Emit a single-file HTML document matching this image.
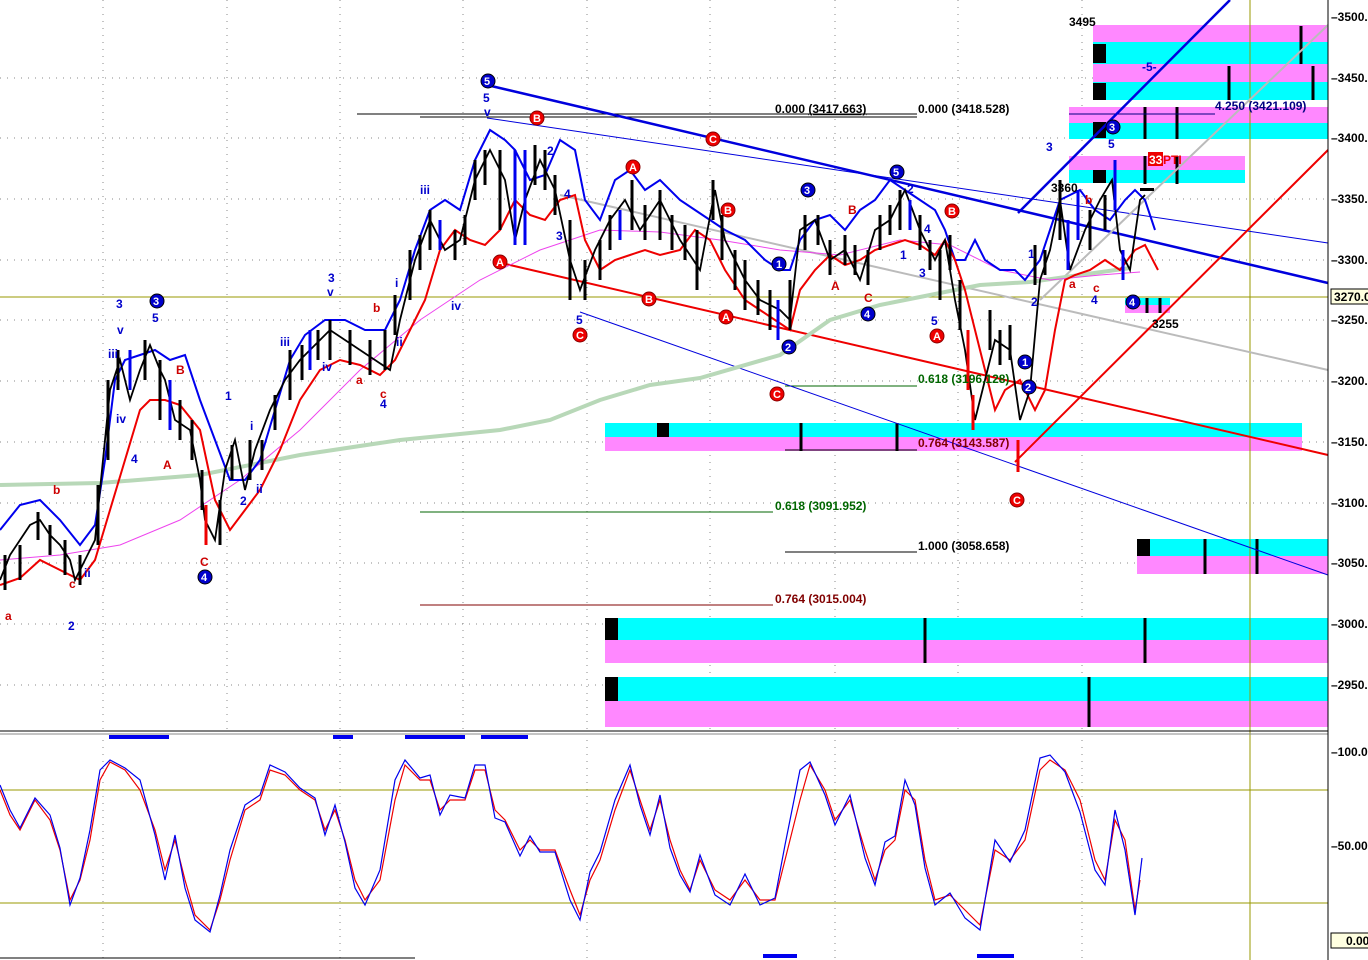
<!DOCTYPE html>
<html><head><meta charset="utf-8"><style>
html,body{margin:0;padding:0;background:#fff;width:1368px;height:960px;overflow:hidden}
svg{display:block;font-family:"Liberation Sans",sans-serif}
</style></head><body>
<svg width="1368" height="960" viewBox="0 0 1368 960" xmlns="http://www.w3.org/2000/svg">
<rect width="1368" height="960" fill="#fff"/>
<g stroke="#888" stroke-dasharray="1,6" stroke-width="1">
<line x1="103" y1="0" x2="103" y2="730"/><line x1="227" y1="0" x2="227" y2="730"/><line x1="340" y1="0" x2="340" y2="730"/><line x1="463" y1="0" x2="463" y2="730"/><line x1="587" y1="0" x2="587" y2="730"/><line x1="710" y1="0" x2="710" y2="730"/><line x1="835" y1="0" x2="835" y2="730"/><line x1="958" y1="0" x2="958" y2="730"/><line x1="1082" y1="0" x2="1082" y2="730"/>
<line x1="0" y1="78" x2="1328" y2="78"/><line x1="0" y1="138" x2="1328" y2="138"/><line x1="0" y1="199" x2="1328" y2="199"/><line x1="0" y1="260" x2="1328" y2="260"/><line x1="0" y1="320" x2="1328" y2="320"/><line x1="0" y1="381" x2="1328" y2="381"/><line x1="0" y1="442" x2="1328" y2="442"/><line x1="0" y1="503" x2="1328" y2="503"/><line x1="0" y1="563" x2="1328" y2="563"/><line x1="0" y1="624" x2="1328" y2="624"/><line x1="0" y1="685" x2="1328" y2="685"/>
<line x1="103" y1="740" x2="103" y2="960"/><line x1="340" y1="740" x2="340" y2="960"/><line x1="587" y1="740" x2="587" y2="960"/><line x1="835" y1="740" x2="835" y2="960"/><line x1="1082" y1="740" x2="1082" y2="960"/>
</g>
<g>
<rect x="1093" y="25" width="235" height="17" fill="#ff88ff"/><rect x="1093" y="42" width="235" height="22" fill="#00ffff"/>
<rect x="1093" y="64" width="235" height="18" fill="#ff88ff"/><rect x="1093" y="82" width="235" height="18" fill="#00ffff"/>
<rect x="1069" y="107" width="259" height="16" fill="#ff88ff"/><rect x="1069" y="123" width="259" height="16" fill="#00ffff"/>
<rect x="1069" y="156" width="176" height="14" fill="#ff88ff"/><rect x="1069" y="170" width="176" height="13" fill="#00ffff"/>
<rect x="605" y="423" width="697" height="14" fill="#00ffff"/><rect x="605" y="437" width="697" height="14" fill="#ff88ff"/>
<rect x="1137" y="539" width="191" height="17" fill="#00ffff"/><rect x="1137" y="556" width="191" height="18" fill="#ff88ff"/>
<rect x="605" y="618" width="723" height="22" fill="#00ffff"/><rect x="605" y="640" width="723" height="23" fill="#ff88ff"/>
<rect x="605" y="677" width="723" height="24" fill="#00ffff"/><rect x="605" y="701" width="723" height="26" fill="#ff88ff"/>
<rect x="1125" y="298" width="45" height="7" fill="#00ffff"/><rect x="1125" y="305" width="45" height="8" fill="#ff88ff"/>
<g fill="#000"><rect x="1093" y="44" width="13" height="19"/><rect x="1093" y="83" width="13" height="17"/><rect x="1093" y="122" width="13" height="16"/><rect x="1093" y="170" width="13" height="13"/><rect x="657" y="423" width="12" height="14"/><rect x="1137" y="539" width="13" height="17"/><rect x="605" y="618" width="13" height="22"/><rect x="605" y="677" width="13" height="24"/></g>
<g stroke="#000" stroke-width="3">
<line x1="1301" y1="26" x2="1301" y2="64"/><line x1="1229" y1="66" x2="1229" y2="100"/><line x1="1313" y1="66" x2="1313" y2="100"/><line x1="1145" y1="107" x2="1145" y2="139"/><line x1="1177" y1="107" x2="1177" y2="139"/><line x1="1145" y1="156" x2="1145" y2="184"/><line x1="1177" y1="156" x2="1177" y2="184"/><line x1="801" y1="423" x2="801" y2="451"/><line x1="897" y1="423" x2="897" y2="451"/><line x1="1205" y1="539" x2="1205" y2="574"/><line x1="1257" y1="539" x2="1257" y2="574"/><line x1="925" y1="618" x2="925" y2="663"/><line x1="1145" y1="618" x2="1145" y2="663"/><line x1="1089" y1="677" x2="1089" y2="727"/><line x1="1147" y1="298" x2="1147" y2="313"/><line x1="1160" y1="298" x2="1160" y2="313"/>
</g></g>
<line x1="0" y1="297" x2="1328" y2="297" stroke="#999900" stroke-width="1"/>
<line x1="1250" y1="0" x2="1250" y2="960" stroke="#999900" stroke-width="1"/>
<g stroke="#000" stroke-width="1">
<line x1="357" y1="114" x2="917" y2="114"/><line x1="420" y1="117" x2="917" y2="117"/><line x1="1069" y1="114" x2="1215" y2="114" stroke="#000080"/>
<line x1="785" y1="450" x2="917" y2="450"/><line x1="785" y1="552" x2="917" y2="552"/>
</g>
<line x1="785" y1="386" x2="917" y2="386" stroke="#006600"/>
<line x1="420" y1="512" x2="773" y2="512" stroke="#006600"/>
<line x1="420" y1="605" x2="773" y2="605" stroke="#800000"/>
<line x1="487" y1="85" x2="1328" y2="283" stroke="#0000dd" stroke-width="2.5"/>
<line x1="497" y1="262" x2="1328" y2="455" stroke="#ee0000" stroke-width="2"/>
<line x1="487" y1="118" x2="1328" y2="243" stroke="#0000dd" stroke-width="1"/>
<line x1="580" y1="312" x2="1328" y2="575" stroke="#0000dd" stroke-width="1"/>
<line x1="560" y1="195" x2="1328" y2="370" stroke="#bbb" stroke-width="2"/>
<line x1="1018" y1="213" x2="1230" y2="0" stroke="#0000dd" stroke-width="2.5"/>
<line x1="1015" y1="462" x2="1328" y2="150" stroke="#ee0000" stroke-width="2"/>
<line x1="1040" y1="300" x2="1328" y2="25" stroke="#bbb" stroke-width="2"/>
<polyline fill="none" stroke="#b8d8b8" stroke-width="4" points="0,485 100,483 200,475 300,455 400,440 500,430 550,420 600,400 650,385 700,378 780,355 830,320 880,305 930,295 980,285 1030,282 1080,275 1130,268"/>
<polyline fill="none" stroke="#ee44ee" stroke-width="1" points="0,560 60,555 120,545 180,520 240,480 300,430 360,370 420,320 480,280 540,250 600,230 660,232 720,240 780,250 840,255 900,240 950,245 1000,270 1050,280 1100,275 1140,272"/>
<polyline fill="none" stroke="#0000ee" stroke-width="2" points="0,530 20,505 40,500 60,520 80,545 95,525 105,460 115,380 125,360 140,355 155,350 170,360 185,355 200,400 215,440 230,480 245,480 260,460 275,410 290,360 305,335 325,320 345,320 365,330 385,330 400,300 415,250 430,210 445,200 460,210 475,160 490,130 505,140 515,150 530,180 545,175 560,140 575,150 585,200 600,220 615,180 630,170 645,190 660,180 680,200 695,210 710,220 725,230 745,240 765,260 780,270 790,270 800,240 815,220 830,215 845,230 860,210 875,200 890,180 905,190 920,200 935,210 945,230 955,260 965,260 975,240 985,260 1000,270 1015,270 1025,280 1040,260 1050,230 1060,200 1070,195 1080,190 1095,210 1110,220 1125,200 1135,190 1145,200 1155,230"/>
<polyline fill="none" stroke="#ee0000" stroke-width="2" points="0,585 20,578 40,560 60,570 80,580 95,560 110,510 125,460 140,410 150,400 165,400 180,405 200,430 215,500 230,530 245,510 260,490 280,450 300,400 320,370 340,360 360,365 380,375 395,360 410,330 425,300 440,250 455,230 470,240 485,245 500,230 515,200 530,215 545,220 560,200 575,195 585,240 600,270 615,260 630,255 645,250 660,255 680,250 695,230 710,240 725,270 745,300 760,310 775,320 790,330 800,290 815,270 830,255 845,265 860,260 875,250 890,245 905,240 920,245 935,255 945,240 955,260 965,290 975,330 985,370 995,410 1005,390 1020,380 1035,410 1045,390 1055,330 1065,280 1075,275 1090,270 1105,260 1120,270 1135,250 1145,245 1158,270"/>
<polyline fill="none" stroke="#000" stroke-width="1.8" points="0,580 10,555 20,540 30,525 40,520 50,535 60,545 70,560 75,580 85,560 95,540 100,490 110,390 120,360 130,400 140,370 150,345 160,370 165,380 175,420 190,430 200,480 205,520 215,540 225,470 235,440 245,490 255,450 270,410 285,380 300,360 315,345 330,330 345,340 360,350 375,360 390,370 400,320 415,260 430,220 445,250 460,240 475,180 490,150 505,180 515,240 525,200 540,160 555,190 570,260 580,290 595,250 610,220 625,200 640,230 660,200 680,240 700,270 715,190 725,240 745,280 760,300 780,310 790,320 800,230 815,220 830,260 845,250 860,280 875,230 890,220 905,190 920,230 935,260 945,240 955,300 965,350 975,420 985,380 995,340 1010,350 1020,420 1030,390 1040,280 1050,250 1060,200 1070,270 1085,230 1100,200 1112,180 1120,250 1130,270 1140,200 1145,195"/>
<g stroke="#000" stroke-width="3">
<line x1="5" y1="555" x2="5" y2="590"/><line x1="20" y1="545" x2="20" y2="580"/><line x1="38" y1="512" x2="38" y2="540"/><line x1="50" y1="525" x2="50" y2="555"/><line x1="65" y1="540" x2="65" y2="575"/><line x1="80" y1="555" x2="80" y2="585"/><line x1="98" y1="485" x2="98" y2="545"/><line x1="108" y1="380" x2="108" y2="460"/><line x1="118" y1="350" x2="118" y2="390"/><line x1="145" y1="340" x2="145" y2="380"/><line x1="160" y1="360" x2="160" y2="420"/><line x1="180" y1="400" x2="180" y2="440"/><line x1="192" y1="420" x2="192" y2="460"/><line x1="202" y1="470" x2="202" y2="510"/><line x1="220" y1="500" x2="220" y2="545"/><line x1="232" y1="445" x2="232" y2="480"/><line x1="250" y1="440" x2="250" y2="480"/><line x1="262" y1="440" x2="262" y2="470"/><line x1="275" y1="395" x2="275" y2="430"/><line x1="290" y1="350" x2="290" y2="400"/><line x1="302" y1="345" x2="302" y2="380"/><line x1="318" y1="330" x2="318" y2="360"/><line x1="330" y1="320" x2="330" y2="360"/><line x1="350" y1="330" x2="350" y2="365"/><line x1="370" y1="340" x2="370" y2="375"/><line x1="385" y1="330" x2="385" y2="370"/><line x1="395" y1="295" x2="395" y2="335"/><line x1="410" y1="250" x2="410" y2="300"/><line x1="420" y1="235" x2="420" y2="270"/><line x1="430" y1="210" x2="430" y2="250"/><line x1="455" y1="230" x2="455" y2="260"/><line x1="465" y1="215" x2="465" y2="245"/><line x1="475" y1="160" x2="475" y2="200"/><line x1="485" y1="150" x2="485" y2="185"/><line x1="500" y1="150" x2="500" y2="230"/><line x1="535" y1="145" x2="535" y2="185"/><line x1="545" y1="150" x2="545" y2="190"/><line x1="555" y1="175" x2="555" y2="215"/><line x1="570" y1="220" x2="570" y2="300"/><line x1="585" y1="260" x2="585" y2="300"/><line x1="600" y1="240" x2="600" y2="280"/><line x1="610" y1="215" x2="610" y2="250"/><line x1="632" y1="180" x2="632" y2="230"/><line x1="645" y1="205" x2="645" y2="240"/><line x1="660" y1="190" x2="660" y2="240"/><line x1="672" y1="215" x2="672" y2="250"/><line x1="685" y1="225" x2="685" y2="260"/><line x1="697" y1="230" x2="697" y2="290"/><line x1="713" y1="180" x2="713" y2="220"/><line x1="722" y1="215" x2="722" y2="260"/><line x1="735" y1="250" x2="735" y2="290"/><line x1="745" y1="260" x2="745" y2="310"/><line x1="758" y1="280" x2="758" y2="315"/><line x1="770" y1="290" x2="770" y2="330"/><line x1="790" y1="280" x2="790" y2="330"/><line x1="805" y1="215" x2="805" y2="250"/><line x1="818" y1="215" x2="818" y2="245"/><line x1="830" y1="240" x2="830" y2="275"/><line x1="845" y1="235" x2="845" y2="265"/><line x1="855" y1="245" x2="855" y2="275"/><line x1="868" y1="250" x2="868" y2="285"/><line x1="880" y1="215" x2="880" y2="250"/><line x1="890" y1="205" x2="890" y2="235"/><line x1="900" y1="190" x2="900" y2="230"/><line x1="920" y1="215" x2="920" y2="250"/><line x1="930" y1="240" x2="930" y2="270"/><line x1="940" y1="250" x2="940" y2="300"/><line x1="950" y1="235" x2="950" y2="270"/><line x1="960" y1="280" x2="960" y2="330"/><line x1="990" y1="310" x2="990" y2="350"/><line x1="1000" y1="330" x2="1000" y2="365"/><line x1="1010" y1="325" x2="1010" y2="360"/><line x1="1035" y1="245" x2="1035" y2="285"/><line x1="1045" y1="250" x2="1045" y2="275"/><line x1="1060" y1="180" x2="1060" y2="240"/><line x1="1090" y1="210" x2="1090" y2="250"/><line x1="1105" y1="195" x2="1105" y2="230"/></g>
<g stroke="#0000ee" stroke-width="3"><line x1="130" y1="350" x2="130" y2="390"/><line x1="170" y1="380" x2="170" y2="430"/><line x1="310" y1="330" x2="310" y2="370"/><line x1="440" y1="220" x2="440" y2="250"/><line x1="515" y1="150" x2="515" y2="245"/><line x1="525" y1="150" x2="525" y2="245"/><line x1="620" y1="210" x2="620" y2="240"/><line x1="778" y1="300" x2="778" y2="340"/><line x1="910" y1="200" x2="910" y2="230"/><line x1="1068" y1="220" x2="1068" y2="270"/><line x1="1078" y1="190" x2="1078" y2="240"/><line x1="1115" y1="160" x2="1115" y2="210"/><line x1="1123" y1="250" x2="1123" y2="280"/></g>
<g stroke="#ee0000" stroke-width="3"><line x1="206" y1="505" x2="206" y2="545"/><line x1="968" y1="330" x2="968" y2="390"/><line x1="973" y1="395" x2="973" y2="430"/><line x1="1018" y1="440" x2="1018" y2="472"/></g>
<g font-size="12" fill="#0000cc" font-weight="bold">
<text x="116" y="308">3</text><text x="117" y="334">v</text><text x="108" y="358">iii</text><text x="116" y="423">iv</text><text x="131" y="463">4</text><text x="152" y="322">5</text><text x="225" y="400">1</text><text x="250" y="430">i</text><text x="240" y="505">2</text><text x="256" y="493">ii</text><text x="84" y="577">ii</text><text x="68" y="630">2</text><text x="280" y="346">iii</text><text x="328" y="282">3</text><text x="327" y="296">v</text><text x="322" y="371">iv</text><text x="380" y="408">4</text><text x="395" y="287">i</text><text x="396" y="346">ii</text><text x="420" y="194">iii</text><text x="451" y="310">iv</text><text x="483" y="102">5</text><text x="484" y="116">v</text><text x="547" y="155">2</text><text x="564" y="198">4</text><text x="556" y="240">3</text><text x="576" y="324">5</text><text x="907" y="193">2</text><text x="900" y="259">1</text><text x="919" y="277">3</text><text x="924" y="233">4</text><text x="931" y="325">5</text><text x="1046" y="151">3</text><text x="1028" y="258">1</text><text x="1031" y="306">2</text><text x="1108" y="148">5</text><text x="1091" y="304">4</text><text x="1142" y="71">-5-</text></g>
<g font-size="12" fill="#cc0000" font-weight="bold"><text x="5" y="620">a</text><text x="53" y="494">b</text><text x="69" y="588">c</text><text x="176" y="374">B</text><text x="163" y="469">A</text><text x="200" y="566">C</text><text x="373" y="312">b</text><text x="356" y="384">a</text><text x="380" y="398">c</text><text x="831" y="290">A</text><text x="848" y="214">B</text><text x="864" y="302">C</text><text x="1069" y="288">a</text><text x="1085" y="204">b</text><text x="1093" y="292">c</text></g>
<g font-size="11" font-weight="bold" fill="#fff">
<g fill="#0000cc" stroke="#000"><circle cx="157" cy="301" r="7"/><circle cx="205" cy="577" r="7"/><circle cx="488" cy="81" r="7"/><circle cx="808" cy="190" r="7"/><circle cx="779" cy="264" r="7"/><circle cx="789" cy="347" r="7"/><circle cx="868" cy="314" r="7"/><circle cx="897" cy="172" r="7"/><circle cx="1025" cy="362" r="7"/><circle cx="1029" cy="387" r="7"/><circle cx="1113" cy="127" r="7"/><circle cx="1133" cy="302" r="7"/></g>
<text x="153" y="305">3</text><text x="201" y="581">4</text><text x="484" y="85">5</text><text x="804" y="194">3</text><text x="776" y="268">1</text><text x="785" y="351">2</text><text x="864" y="318">4</text><text x="893" y="176">5</text><text x="1022" y="366">1</text><text x="1025" y="391">2</text><text x="1109" y="131">3</text><text x="1129" y="306">4</text>
<g fill="#ee0000" stroke="#800"><circle cx="537" cy="118" r="7"/><circle cx="500" cy="262" r="7"/><circle cx="580" cy="335" r="7"/><circle cx="633" cy="167" r="7"/><circle cx="649" cy="299" r="7"/><circle cx="713" cy="139" r="7"/><circle cx="728" cy="210" r="7"/><circle cx="726" cy="317" r="7"/><circle cx="777" cy="394" r="7"/><circle cx="952" cy="211" r="7"/><circle cx="937" cy="336" r="7"/><circle cx="1017" cy="500" r="7"/></g>
<text x="533" y="122">B</text><text x="496" y="266">A</text><text x="576" y="339">C</text><text x="629" y="171">A</text><text x="645" y="303">B</text><text x="709" y="143">C</text><text x="724" y="214">B</text><text x="722" y="321">A</text><text x="773" y="398">C</text><text x="948" y="215">B</text><text x="933" y="340">A</text><text x="1013" y="504">C</text></g>
<g font-size="12" font-weight="bold">
<text x="775" y="113" fill="#000">0.000 <tspan text-decoration="underline">(3417.663)</tspan></text>
<text x="918" y="113" fill="#000">0.000 (3418.528)</text>
<text x="1215" y="110" fill="#000080">4.250 (3421.109)</text>
<text x="918" y="383" fill="#006600">0.618 (3196.128)</text>
<text x="918" y="447" fill="#800000">0.764 (3143.587)</text>
<text x="775" y="510" fill="#006600">0.618 (3091.952)</text>
<text x="918" y="550" fill="#000">1.000 (3058.658)</text>
<text x="775" y="603" fill="#800000">0.764 (3015.004)</text>
<text x="1069" y="26" fill="#000">3495</text>
<text x="1051" y="192" fill="#000">3360</text>
<text x="1152" y="328" fill="#000">3255</text>
<rect x="1148" y="152" width="15" height="14" fill="#ee0000"/><text x="1149" y="164" fill="#fff">33</text><text x="1163" y="164" fill="#ee0000">PTI</text>
</g>
<rect x="1140" y="188" width="14" height="3" fill="#000"/>
<line x1="0" y1="731" x2="1368" y2="731" stroke="#000" stroke-width="1"/>
<line x1="0" y1="734" x2="1368" y2="734" stroke="#888" stroke-width="1"/>
<g fill="#0000ee"><rect x="109" y="735" width="60" height="4"/><rect x="333" y="735" width="20" height="4"/><rect x="405" y="735" width="60" height="4"/><rect x="481" y="735" width="47" height="4"/><rect x="763" y="954" width="34" height="4"/><rect x="977" y="954" width="37" height="4"/></g>
<line x1="0" y1="958" x2="415" y2="958" stroke="#000"/>
<line x1="0" y1="790" x2="1328" y2="790" stroke="#999900"/>
<line x1="0" y1="903" x2="1328" y2="903" stroke="#999900"/>
<polyline fill="none" stroke="#ee0000" stroke-width="1.2" points="0,790 10,815 20,830 35,800 50,820 60,850 70,900 80,880 90,840 100,780 110,762 125,770 140,790 155,830 165,870 175,840 185,880 195,915 210,930 220,900 230,860 245,810 260,800 270,770 285,775 300,790 315,800 325,830 335,810 345,840 355,880 365,900 380,880 395,800 405,765 420,780 430,780 440,810 450,800 465,800 475,770 485,770 495,810 505,820 520,850 530,840 540,850 555,850 570,890 580,915 590,880 600,860 615,810 630,770 640,800 650,830 660,800 670,840 680,870 690,890 700,860 715,890 730,900 745,880 760,900 775,900 785,860 800,800 810,765 825,790 835,820 850,800 865,850 875,880 885,850 895,840 905,790 915,800 925,860 935,900 950,895 965,910 980,925 995,850 1010,860 1025,840 1040,770 1050,760 1065,770 1080,800 1095,860 1105,880 1115,820 1125,840 1135,910 1140,880"/>
<polyline fill="none" stroke="#0000ee" stroke-width="1.2" points="0,785 10,810 20,828 35,798 50,815 60,848 70,905 80,878 90,830 100,770 110,760 125,768 140,780 155,835 165,880 175,835 185,888 195,920 210,932 220,895 230,850 245,805 260,795 270,765 285,772 300,788 315,798 325,835 335,805 345,842 355,888 365,905 380,870 395,780 405,760 420,778 430,775 440,815 450,795 465,798 475,765 485,765 495,818 505,822 520,856 530,836 540,852 555,852 570,900 580,920 590,872 600,852 615,800 630,765 640,805 650,835 660,795 670,848 680,875 690,892 700,855 715,895 730,905 745,874 760,905 775,898 785,845 800,770 810,762 825,795 835,825 850,795 865,858 875,885 885,842 895,836 905,780 915,805 925,868 935,905 950,893 965,918 980,930 995,840 1010,862 1025,830 1040,758 1050,755 1065,772 1080,812 1095,870 1105,885 1115,810 1125,850 1135,915 1142,858"/>
<rect x="1328" y="0" width="40" height="960" fill="#fff"/>
<line x1="1328" y1="0" x2="1328" y2="960" stroke="#000"/>
<g font-size="12" fill="#000" font-weight="bold">
<text x="1331" y="21">–3500.</text><text x="1331" y="82">–3450.</text><text x="1331" y="142">–3400.</text><text x="1331" y="203">–3350.</text><text x="1331" y="264">–3300.</text><text x="1331" y="324">–3250.</text><text x="1331" y="385">–3200.</text><text x="1331" y="446">–3150.</text><text x="1331" y="507">–3100.</text><text x="1331" y="567">–3050.</text><text x="1331" y="628">–3000.</text><text x="1331" y="689">–2950.</text>
<text x="1331" y="756">–100.0</text><text x="1331" y="850">–50.00</text>
</g>
<rect x="1331" y="289" width="40" height="15" fill="#ffffe0" stroke="#000"/><text x="1334" y="301" font-size="12" font-weight="bold" fill="#000">3270.0</text>
<rect x="1331" y="933" width="40" height="15" fill="#ffffe0" stroke="#000"/><text x="1346" y="945" font-size="12" font-weight="bold" fill="#000">0.00</text>
</svg>
</body></html>
